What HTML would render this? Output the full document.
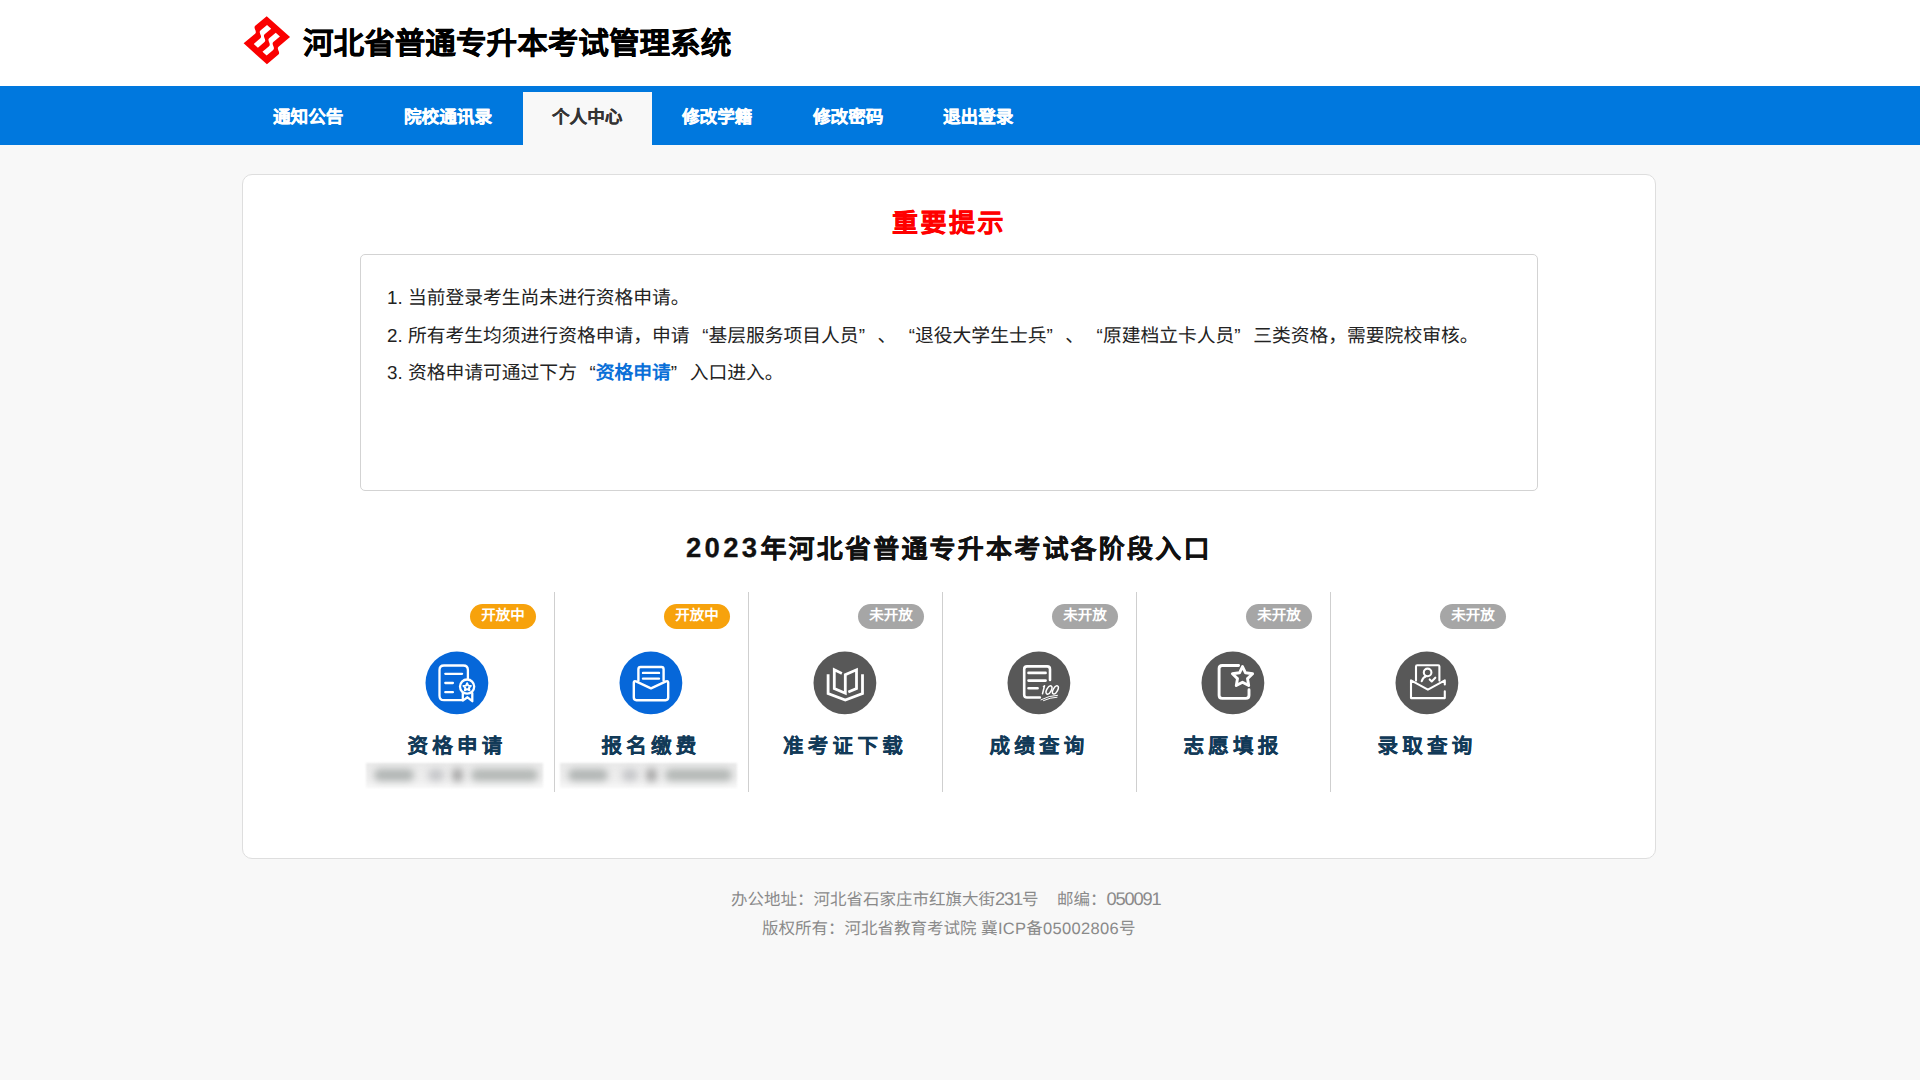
<!DOCTYPE html>
<html lang="zh-CN"><head><meta charset="utf-8">
<style>
*{margin:0;padding:0;box-sizing:border-box}
html,body{width:1920px;height:1080px;overflow:hidden}
body{text-rendering:geometricPrecision;background:#f8f8f8;font-family:"Liberation Sans",sans-serif;color:#222;position:relative}
.abs{position:absolute;white-space:nowrap}
.header{position:absolute;left:0;top:0;width:1920px;height:86px;background:#fff}
.title{left:303px;top:22px;font-size:30.6px;font-weight:bold;color:#000;line-height:44px;-webkit-text-stroke:0.35px #000}
.nav{position:absolute;left:0;top:86px;width:1920px;height:59px;background:#0078de}
.nav .t{position:absolute;top:2px;height:59px;line-height:58px;font-size:17.6px;font-weight:bold;color:#fff;white-space:nowrap;-webkit-text-stroke:0.3px #fff}
.nav .on{position:absolute;left:523px;top:6px;width:129px;height:53px;background:#f8f8f8}
.nav .t.d{color:#333;-webkit-text-stroke:0.2px #333}
.card{position:absolute;left:242px;top:174px;width:1414px;height:685px;background:#fff;border:1px solid #dedede;border-radius:10px}
.imp{font-size:26px;font-weight:bold;color:#f00;line-height:36px;letter-spacing:2.5px;-webkit-text-stroke:0.4px #f00}
.box{position:absolute;left:360px;top:254px;width:1178px;height:237px;border:1px solid #d3d3d3;border-radius:5px;background:#fff}
.ln{font-size:18.8px;line-height:26px;color:#222}
.ln b{color:#0a70d8;font-weight:bold}
.ql,.qr{display:inline-block;width:18.8px}.ql{text-align:right}.qr{text-align:left}
.sub{font-size:26px;font-weight:bold;color:#111;letter-spacing:2.2px;line-height:36px;-webkit-text-stroke:0.3px #111}
.sep{position:absolute;top:592px;width:1px;height:200px;background:#cfcfcf}
.badge{position:absolute;width:66px;height:25px;border-radius:12.5px;color:#fff;font-size:14.5px;font-weight:bold;text-align:center;line-height:25px;letter-spacing:0px}
.badge.o{background:#f7a20c}
.badge.g{background:#a6a6a6}
.ic{position:absolute;top:651px;width:64px;height:64px}
.lab{position:absolute;top:732px;width:194px;text-align:center;font-size:20.5px;font-weight:bold;color:#123a58;letter-spacing:4.3px;text-indent:0px;line-height:30px;-webkit-text-stroke:0.2px #123a58}
.blurbox{position:absolute;top:763px;width:177px;height:25px;background:linear-gradient(#e9e9e9,#efefef 70%,#f8f8f8);filter:blur(1px)}
.blob{position:absolute;filter:blur(3.5px);border-radius:6px}
.foot{font-size:16.5px;color:#8a8a8a;line-height:24px}.dg{font-size:18.3px;letter-spacing:-1.15px}
</style></head><body>
<div class="header">
<svg class="abs" style="left:240px;top:14px" width="52" height="52" viewBox="0 0 52 52">
<g transform="matrix(0.745 0.668 -0.766 0.643 26.72 2.17)">
<path fill="#fa0000" fill-rule="evenodd" d="M0 0 L31.3 0 L31.3 15 C31.3 18.2 37.3 17.8 37.3 21 L37.3 36 L6 36 L6 21 C6 17.8 0 18.2 0 15 Z
M7 6.4 L12.6 6.4 L12.6 15 C12.6 18.2 18.6 17.8 18.6 21 L18.6 29.6 L13 29.6 L13 21 C13 17.8 7 18.2 7 15 Z
M18.7 6.4 L24.3 6.4 L24.3 15 C24.3 18.2 30.3 17.8 30.3 21 L30.3 29.6 L24.7 29.6 L24.7 21 C24.7 17.8 18.7 18.2 18.7 15 Z"/>
</g>
</svg>
<div class="abs title">河北省普通专升本考试管理系统</div>
</div>
<div class="nav">
<div class="on"></div>
<div class="t" style="left:273px">通知公告</div>
<div class="t" style="left:404px">院校通讯录</div>
<div class="t d" style="left:552px">个人中心</div>
<div class="t" style="left:682px">修改学籍</div>
<div class="t" style="left:813px">修改密码</div>
<div class="t" style="left:943px">退出登录</div>
</div>
<div class="card"></div>
<div class="abs imp" style="left:892px;top:204.5px">重要提示</div>
<div class="box"></div>
<div class="abs ln" style="left:387px;top:285px">1. 当前登录考生尚未进行资格申请。</div>
<div class="abs ln" style="left:387px;top:322.6px">2. 所有考生均须进行资格申请，申请<span class="ql">“</span>基层服务项目人员<span class="qr">”</span>、<span class="ql">“</span>退役大学生士兵<span class="qr">”</span>、<span class="ql">“</span>原建档立卡人员<span class="qr">”</span>三类资格，需要院校审核。</div>
<div class="abs ln" style="left:387px;top:360px">3. 资格申请可通过下方<span class="ql">“</span><b>资格申请</b><span class="qr">”</span>入口进入。</div>
<div class="abs sub" style="left:686px;top:531px"><span style="font-size:27.5px;letter-spacing:3.3px;position:relative;top:-1px">2023</span>年河北省普通专升本考试各阶段入口</div>

<div class="sep" style="left:554px"></div>
<div class="sep" style="left:748px"></div>
<div class="sep" style="left:942px"></div>
<div class="sep" style="left:1136px"></div>
<div class="sep" style="left:1330px"></div>

<div class="badge o" style="left:470px;top:604px">开放中</div>
<div class="badge o" style="left:664px;top:604px">开放中</div>
<div class="badge g" style="left:858px;top:604px">未开放</div>
<div class="badge g" style="left:1052px;top:604px">未开放</div>
<div class="badge g" style="left:1246px;top:604px">未开放</div>
<div class="badge g" style="left:1440px;top:604px">未开放</div>

<!-- icon 1: certificate -->
<svg class="ic" style="left:425px" viewBox="0 0 64 64">
<circle cx="31.9" cy="31.9" r="31.4" fill="#0667d9"/>
<g fill="none" stroke="#fff" stroke-width="2.3" stroke-linecap="round" stroke-linejoin="round">
<path d="M42.9 27.6 V19 Q42.9 14.5 38.4 14.5 H19 Q14.5 14.5 14.5 19 V44.7 Q14.5 49.2 19 49.2 H37"/>
<path d="M20.3 22.8 H37.1 M20.3 32 H27.9 M20.3 41.2 H27.9"/>
<circle cx="42.1" cy="35.6" r="7.1"/>
<path d="M37.8 42.2 V49.6 L42.5 46.3 L47.3 50.2 V42.2"/>
<path transform="translate(0 1.3)" d="M42.1 30.9 L43.3 33.3 L45.9 33.6 L44 35.4 L44.5 38 L42.1 36.8 L39.8 38 L40.3 35.4 L38.4 33.6 L41 33.3 Z" stroke-width="1.9"/>
</g>
</svg>
<!-- icon 2: envelope -->
<svg class="ic" style="left:619px" viewBox="0 0 64 64">
<circle cx="31.9" cy="31.9" r="31.4" fill="#0667d9"/>
<g fill="none" stroke="#fff" stroke-width="2.4" stroke-linecap="round" stroke-linejoin="round">
<path d="M19.4 29.5 V18.2 Q19.4 16 21.6 16 H42.4 Q44.6 16 44.6 18.2 V29.5"/>
<path d="M24 21.9 H40 M24 27.6 H40"/>
<path d="M14.8 46.6 V31.6 Q14.8 29.4 17 30.4 L32 37.4 L47 30.4 Q49.2 29.4 49.2 31.6 V46.6 Q49.2 49.2 46.6 49.2 H17.4 Q14.8 49.2 14.8 46.6 Z"/>
</g>
</svg>
<!-- icon 3: book -->
<svg class="ic" style="left:813px" viewBox="0 0 64 64">
<circle cx="31.9" cy="31.9" r="31.4" fill="#585858"/>
<g fill="none" stroke="#fff" stroke-width="2.8" stroke-linecap="square" stroke-linejoin="miter">
<path d="M15.1 24.6 V42.6 L32.3 49.1 L49.5 42.6 V24.6"/>
<path d="M27.6 21.8 L21.3 18.8 V37.6 L32.3 42.2 V23.6 L43.5 18.8 V37.6 L36.6 40.4"/>
</g>
</svg>
<!-- icon 4: score -->
<svg class="ic" style="left:1007px" viewBox="0 0 64 64">
<circle cx="31.9" cy="31.9" r="31.4" fill="#585858"/>
<g fill="none" stroke="#fff" stroke-width="2.6" stroke-linecap="round" stroke-linejoin="round">
<path d="M43 29 V18.2 Q43 15.4 40.2 15.4 H20 Q17.2 15.4 17.2 18.2 V43.7 Q17.2 46.5 20 46.5 H32.9"/>
<path d="M21.5 21.9 H38.6 M21.5 29.6 H38.6 M21.5 37.3 H30.6"/>
</g>
<g fill="none" stroke="#fff" stroke-width="1.5" stroke-linecap="round" stroke-linejoin="round">
<path d="M36.5 35.5 L37.5 34.8 L35.5 42.8"/>
<ellipse cx="42" cy="39" rx="2.2" ry="4.5" transform="rotate(28 42 39)"/>
<ellipse cx="48.4" cy="38.9" rx="2.2" ry="4.5" transform="rotate(28 48.4 38.9)"/>
<path d="M34 48.8 Q42 44.5 50.5 44.3 M36.5 49.6 Q43 46.6 50 46.2" stroke-width="1"/>
</g>
</svg>
<!-- icon 5: star -->
<svg class="ic" style="left:1201px" viewBox="0 0 64 64">
<circle cx="31.9" cy="31.9" r="31.4" fill="#585858"/>
<g fill="none" stroke="#fff" stroke-width="2.9" stroke-linecap="round" stroke-linejoin="round">
<path d="M37.6 14.5 H21.2 Q18.1 14.5 18.1 17.6 V44.3 Q18.1 47.4 21.2 47.4 H44.9 Q48 47.4 48 44.3 V38.8"/>
<path d="M41.5 15.6 L44.5 21.8 L51.6 22.8 L46.5 27.6 L47.7 34.5 L41.5 31.2 L35.3 34.5 L36.5 27.6 L31.4 22.8 L38.5 21.8 Z"/>
</g>
</svg>
<!-- icon 6: admission -->
<svg class="ic" style="left:1395px" viewBox="0 0 64 64">
<circle cx="31.9" cy="31.9" r="31.4" fill="#585858"/>
<g fill="none" stroke="#fff" stroke-width="2.1" stroke-linecap="round" stroke-linejoin="round">
<path d="M21 29.6 V15.4 Q21 14.2 22.2 14.2 H43.2 Q44.4 14.2 44.4 15.4 V29.6"/>
<circle cx="32.6" cy="21.4" r="3.8"/>
<path d="M26.7 30.2 Q27.8 26.3 31.2 25.2"/>
<path d="M34.7 28.4 L36.7 30.4 L40.3 26.7"/>
<path d="M49.8 33.5 V29.4 L32.9 38.6 L16 29.4 V47.1 H49.8 V40.3"/>
</g>
</svg>

<div class="lab" style="left:360px">资格申请</div>
<div class="lab" style="left:554px">报名缴费</div>
<div class="lab" style="left:748px">准考证下载</div>
<div class="lab" style="left:942px">成绩查询</div>
<div class="lab" style="left:1136px">志愿填报</div>
<div class="lab" style="left:1330px">录取查询</div>

<div class="blurbox" style="left:366px"></div>
<div class="blob" style="left:374px;top:769px;width:40px;height:12px;background:#b2b6b5"></div>
<div class="blob" style="left:428px;top:769px;width:16px;height:12px;background:#c6c7ca"></div>
<div class="blob" style="left:452px;top:768px;width:11px;height:14px;background:#a9a9a9"></div>
<div class="blob" style="left:471px;top:769px;width:67px;height:12px;background:#b4b8b6"></div>
<div class="blurbox" style="left:560px"></div>
<div class="blob" style="left:568px;top:769px;width:40px;height:12px;background:#b2b6b5"></div>
<div class="blob" style="left:622px;top:769px;width:16px;height:12px;background:#c6c7ca"></div>
<div class="blob" style="left:646px;top:768px;width:11px;height:14px;background:#a9a9a9"></div>
<div class="blob" style="left:665px;top:769px;width:67px;height:12px;background:#b4b8b6"></div>

<div class="abs foot" style="left:731px;top:887px">办公地址：河北省石家庄市红旗大街<span class="dg">231</span>号&nbsp;&nbsp;&nbsp;&nbsp;邮编：<span class="dg">050091</span></div>
<div class="abs foot" style="left:762px;top:916.5px">版权所有：河北省教育考试院 <span style="letter-spacing:0.3px">冀ICP备05002806</span>号</div>
</body></html>
